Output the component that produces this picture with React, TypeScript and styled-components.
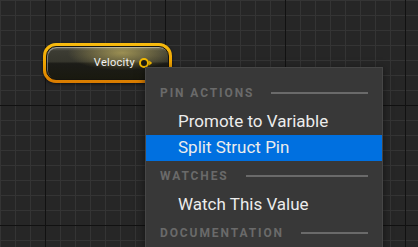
import styled, { createGlobalStyle } from "styled-components";

const GlobalStyle = createGlobalStyle`
  html, body {
    margin: 0;
    padding: 0;
    background: #262626;
    overflow: hidden;
  }
`;

const Canvas = styled.main`
  position: relative;
  width: 418px;
  height: 247px;
  overflow: hidden;
  font-family: Roboto, "Noto Sans", "Liberation Sans", sans-serif;
  background-color: #262626;
  background-image:
    linear-gradient(to right, #111 1px, transparent 1px),
    linear-gradient(to bottom, #111 1px, transparent 1px),
    linear-gradient(to right, #343434 1px, transparent 1px),
    linear-gradient(to bottom, #343434 1px, transparent 1px);
  background-size: 120px 120px, 120px 120px, 15px 15px, 15px 15px;
  background-position: 45px 0, 0 105px, 0 0, 0 0;
`;

const Node = styled.div`
  position: absolute;
  left: 43px;
  top: 43px;
  width: 129px;
  height: 40px;
  box-sizing: border-box;
  border-radius: 13px;
  padding: 3px;
  background: linear-gradient(#f8bc10, #eda000 55%, #d87a00);
  box-shadow: 0 1px 3px rgba(0, 0, 0, 0.6);
`;

const NodeBody = styled.div`
  height: 100%;
  box-sizing: border-box;
  border-radius: 10px;
  border: 1px solid #15140f;
  display: flex;
  align-items: center;
  justify-content: flex-end;
  gap: 4px;
  padding: 0 15px 1px 0;
  background:
    radial-gradient(ellipse 45% 55% at 62% 18%, rgba(220, 200, 105, 0.6), transparent 100%),
    linear-gradient(#6e6e64 0%, #3c3c33 12%, #36362d 45%, #1c1c18 52%, #19190f 100%);
  box-shadow: inset 1px 1px 0 rgba(255, 255, 255, 0.35);
`;

const NodeLabel = styled.span`
  color: #f2f2f2;
  font-size: 11px;
  letter-spacing: 0.3px;
`;

const Pin = styled.svg`
  display: block;
  margin-top: 1px;
`;

const Menu = styled.div`
  position: absolute;
  left: 145px;
  top: 67px;
  width: 238px;
  box-sizing: border-box;
  padding-top: 10px;
  background: #383838;
  border: 1px solid #464646;
  border-bottom: none;
  box-shadow: 0 2px 8px rgba(0, 0, 0, 0.5);
`;

const Header = styled.div`
  height: 31px;
  display: flex;
  align-items: center;
  gap: 17px;
  padding: 0 14px 1px 14px;
  box-sizing: border-box;
`;

const HeaderText = styled.span`
  color: #6a6a6a;
  font-size: 12px;
  font-weight: bold;
  letter-spacing: 1.9px;
  white-space: nowrap;
`;

const HeaderRule = styled.span`
  flex: 1;
  height: 2px;
  background: #6a6a6a;
`;

const Item = styled.div<{ $active?: boolean }>`
  height: 26px;
  display: flex;
  align-items: center;
  padding: 0 0 2px 32px;
  box-sizing: border-box;
  color: #ececec;
  font-size: 17px;
  background: ${({ $active }) => ($active ? "#0070e0" : "transparent")};
`;

const PinIcon = () => (
  <Pin width="14" height="12" viewBox="0 0 14 12">
    <circle cx="5" cy="6" r="4" fill="#1a1a14" stroke="#f2b800" strokeWidth="2" />
    <path d="M10.2 3.6 L13.2 6 L10.2 8.4 Z" fill="#f2b800" />
  </Pin>
);

const sections = [
  { title: "PIN ACTIONS", items: ["Promote to Variable", "Split Struct Pin"] },
  { title: "WATCHES", items: ["Watch This Value"] },
  { title: "DOCUMENTATION", items: [] as string[] },
];

const App = () => {
  return (
    <>
      <GlobalStyle />
      <Canvas>
        <Node>
          <NodeBody>
            <NodeLabel>Velocity</NodeLabel>
            <PinIcon />
          </NodeBody>
        </Node>
        <Menu>
          {sections.map((section) => (
            <div key={section.title}>
              <Header>
                <HeaderText>{section.title}</HeaderText>
                <HeaderRule />
              </Header>
              {section.items.map((item) => (
                <Item key={item} $active={item === "Split Struct Pin"}>
                  {item}
                </Item>
              ))}
            </div>
          ))}
        </Menu>
      </Canvas>
    </>
  );
};

export default App;
